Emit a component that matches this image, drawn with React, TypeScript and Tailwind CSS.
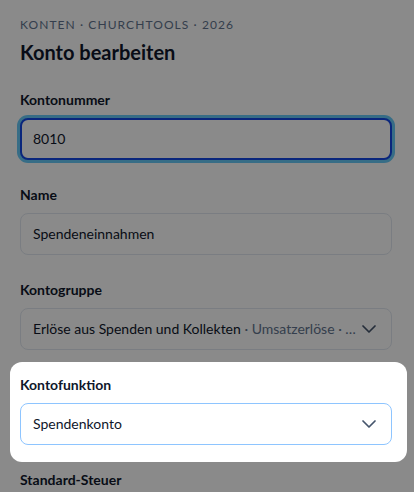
import { ChevronDown } from "lucide-react";

function Label({ children }: { children: React.ReactNode }) {
  return <div className="text-sm leading-5 font-bold text-slate-900 mb-2">{children}</div>;
}

function SelectBox({ children, active }: { children: React.ReactNode; active?: boolean }) {
  return (
    <div
      className={
        active
          ? "h-[42px] flex items-center pl-3 pr-[10px] rounded-lg border border-blue-300 bg-white"
          : "h-[42px] flex items-center pl-3 pr-[10px] rounded-lg border border-slate-200 bg-white"
      }
    >
      <span className="flex-1 min-w-0 whitespace-nowrap text-sm text-slate-900">{children}</span>
      <ChevronDown size={24} strokeWidth={1.75} className="text-slate-600 shrink-0" />
    </div>
  );
}

export default function App() {
  return (
    <div className="relative h-[492px] overflow-hidden bg-white font-['Lato',sans-serif]">
      <div className="pl-5 pr-[22px] pt-[17px]">
        <div className="text-xs leading-4 tracking-[0.09em] uppercase text-slate-500">
          Konten · ChurchTools · 2026
        </div>
        <h1 className="mt-[5px] text-xl leading-7 font-bold text-slate-900">Konto bearbeiten</h1>

        <div className="mt-6 flex flex-col gap-[25px]">
          <div>
            <Label>Kontonummer</Label>
            <div className="h-[42px] flex items-center px-[11px] rounded-lg border-2 border-blue-700 ring-[3px] ring-sky-500/60 bg-white text-sm text-slate-900">
              8010
            </div>
          </div>

          <div>
            <Label>Name</Label>
            <div className="h-[42px] flex items-center px-3 rounded-lg border border-slate-200 bg-white text-sm text-slate-900">
              Spendeneinnahmen
            </div>
          </div>

          <div>
            <Label>Kontogruppe</Label>
            <SelectBox>
              Erlöse aus Spenden und Kollekten <span className="text-slate-500">· Umsatzerlöse · …</span>
            </SelectBox>
          </div>

          {/* Spotlight: hebt das Feld über das Overlay */}
          <div className="relative z-20 -ml-[10px] -mr-[15px] -mt-[13px] -mb-[17px] pl-[10px] pr-[15px] pt-[13px] pb-[17px] bg-white rounded-xl">
            <Label>Kontofunktion</Label>
            <SelectBox active>Spendenkonto</SelectBox>
          </div>

          <div>
            <Label>Standard-Steuer</Label>
            <SelectBox>Keine Steuer</SelectBox>
          </div>
        </div>
      </div>

      <div className="absolute inset-0 z-10 bg-black/[0.46]" />
    </div>
  );
}
